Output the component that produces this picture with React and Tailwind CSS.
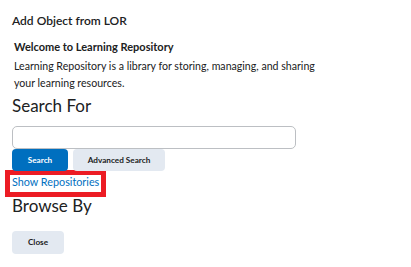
import React from 'react';

const App = () => {
  return (
    <div className="w-[411px] h-[267px] bg-white text-[#202122] overflow-hidden" style={{ fontFamily: 'Lato, "Open Sans", sans-serif' }}>
      <div className="pl-3 pt-[13px]">
        <h1 className="text-[12px] leading-[16px] font-semibold">Add Object from LOR</h1>

        <div className="pl-[2px] mt-[10px]">
          <h2 className="text-[11px] leading-[16px] font-bold">Welcome to Learning Repository</h2>
          <p className="mt-[3px] text-[10.6px] leading-[16.5px] w-[312px]">
            Learning Repository is a library for storing, managing, and sharing your learning resources.
          </p>
        </div>

        <h2 className="mt-[5px] text-[17px] leading-[20px] font-normal">Search For</h2>

        <input
          type="text"
          className="mt-[10px] block w-[284px] h-[23px] border border-[#bcbfc3] rounded-[5px] outline-none"
        />

        <div className="flex gap-[5px]">
          <button className="w-[56px] h-[22px] rounded-[4px] bg-[#006fbf] text-white text-[8.2px] font-bold">Search</button>
          <button className="w-[92px] h-[22px] rounded-[4px] bg-[#e3e9f1] text-[#202122] text-[8.2px] font-bold">Advanced Search</button>
        </div>

        <div className="-ml-[7px] -mt-[1px] w-[101px] h-[27px] border-[5px] border-[#ec1c24] pl-[2px]">
          <a className="block whitespace-nowrap text-[10.8px] leading-[14px] text-[#006fbf]" href="#">Show Repositories</a>
        </div>

        <h2 className="-mt-[1px] text-[17px] leading-[20px] font-normal">Browse By</h2>

        <button className="mt-[15px] w-[52px] h-[23px] rounded-[4px] bg-[#e3e9f1] text-[#202122] text-[8.2px] font-bold">Close</button>
      </div>
    </div>
  );
};

export default App;
